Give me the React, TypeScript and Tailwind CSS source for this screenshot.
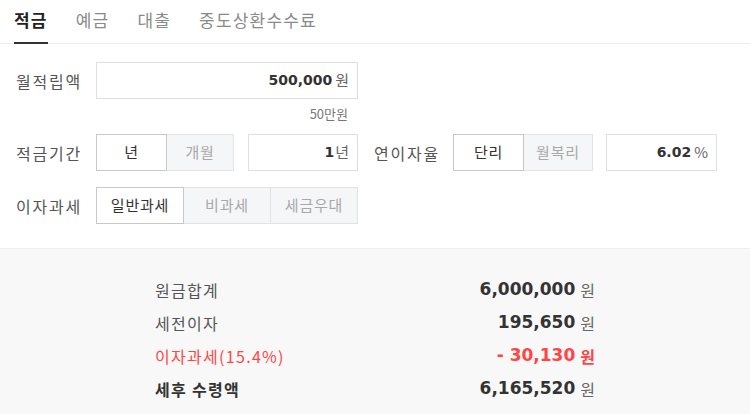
import React from "react";

const KR = { fontFamily: '"Noto Sans CJK KR", "Noto Sans", sans-serif' };
const NUM = { fontFamily: '"DejaVu Sans", Verdana, sans-serif', letterSpacing: 0 };

function Seg({ label, active, w, first }: { label: string; active?: boolean; w: string; first?: boolean }) {
  return (
    <div
      className={`${w} h-[37px] flex items-center justify-center text-[15px] tracking-[0.8px] border ${first ? "" : "-ml-px"} ${
        active ? "bg-white border-[#c8c8c8] text-[#333] relative z-10" : "bg-[#f5f6f8] border-[#e3e3e3] text-[#a8a8a8]"
      }`}
    >
      {label}
    </div>
  );
}

function Field({ w, value, unit, gap = "ml-[3px]" }: { w: string; value: string; unit: string; gap?: string }) {
  return (
    <div className={`${w} h-[37px] border border-[#e0e0e0] bg-white flex items-center justify-end pr-[8px]`}>
      <span className="text-[14px] font-bold text-[#333]" style={NUM}>{value}</span>
      <span className={`text-[15px] text-[#666] ${gap}`}>{unit}</span>
    </div>
  );
}

function ResultRow({ label, value, red, bold }: { label: string; value: string; red?: boolean; bold?: boolean }) {
  return (
    <div className="h-[33px] flex items-center justify-between">
      <span className={`text-[16px] tracking-[1.3px] ${red ? "text-[#ff4646]" : bold ? "text-[#333] font-bold" : "text-[#555]"}`}>{label}</span>
      <span className="flex items-center">
        <span className={`text-[17px] font-bold ${red ? "text-[#ff4646]" : "text-[#333]"}`} style={NUM}>{value}</span>
        <span className={`text-[16px] ml-[5px] ${red ? "text-[#ff4646] font-bold" : "text-[#666]"}`}>원</span>
      </span>
    </div>
  );
}

function Label({ children, w = "w-[80px]", extra = "" }: { children: React.ReactNode; w?: string; extra?: string }) {
  return <div className={`${w} ${extra} text-[16px] tracking-[1.8px] text-[#555] whitespace-nowrap`}>{children}</div>;
}

export default function App() {
  return (
    <div className="w-[750px] h-[414px] bg-white overflow-hidden flex flex-col" style={KR}>
      <div className="h-[44px] shrink-0 border-b border-[#eeeeee] flex pl-[14px] gap-[28px]">
        {["적금", "예금", "대출", "중도상환수수료"].map((t, i) => (
          <div
            key={t}
            className={`relative h-full flex items-center pb-[4px] text-[17px] tracking-[1.2px] ${
              i === 0 ? "text-[#222] font-bold" : "text-[#8a8a8a]"
            }`}
          >
            {t}
            {i === 0 && <div className="absolute left-0 right-0 bottom-[-1px] h-[2px] bg-[#333]" />}
          </div>
        ))}
      </div>

      <div className="pl-[16px] pt-[18px] flex flex-col">
        <div className="flex items-center">
          <Label>월적립액</Label>
          <Field w="w-[262px]" value="500,000" unit="원" />
        </div>
        <div className="w-[342px] text-right pr-[10px] text-[13px] text-[#777] mt-[6px] h-[18px] leading-[18px]">50만원</div>

        <div className="flex items-center mt-[11px]">
          <Label>적금기간</Label>
          <div className="flex">
            <Seg first active label="년" w="w-[71px]" />
            <Seg label="개월" w="w-[68px]" />
          </div>
          <div className="ml-[14px]">
            <Field w="w-[110px]" value="1" unit="년" gap="ml-[1px]" />
          </div>
          <Label w="w-[79px]" extra="ml-[16px]">연이자율</Label>
          <div className="flex">
            <Seg first active label="단리" w="w-[71px]" />
            <Seg label="월복리" w="w-[70px]" />
          </div>
          <div className="ml-[13px]">
            <Field w="w-[111px]" value="6.02" unit="%" />
          </div>
        </div>

        <div className="flex items-center mt-[16px]">
          <Label>이자과세</Label>
          <div className="flex">
            <Seg first active label="일반과세" w="w-[88px]" />
            <Seg label="비과세" w="w-[88px]" />
            <Seg label="세금우대" w="w-[88px]" />
          </div>
        </div>
      </div>

      <div className="mt-[24px] flex-1 bg-[#f8f8f8] border-t border-[#eeeeee] pt-[24px] pl-[155px]">
        <div className="w-[440px] flex flex-col">
          <ResultRow label="원금합계" value="6,000,000" />
          <ResultRow label="세전이자" value="195,650" />
          <ResultRow label="이자과세(15.4%)" value="- 30,130" red />
          <ResultRow label="세후 수령액" value="6,165,520" bold />
        </div>
      </div>
    </div>
  );
}
